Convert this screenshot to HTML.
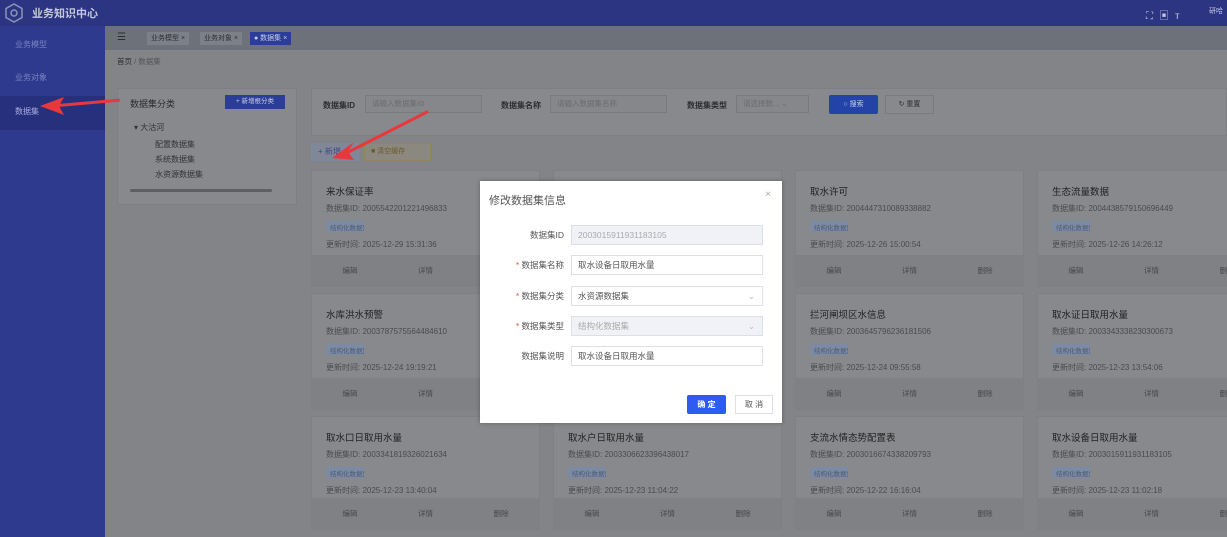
<!DOCTYPE html>
<html><head><meta charset="utf-8"><style>
*{margin:0;padding:0;box-sizing:border-box}
body{width:1227px;height:537px;overflow:hidden;position:relative;background:#828487;font-family:"Liberation Sans","Noto Sans CJK SC",sans-serif;font-size:9px;color:#333}
.a{position:absolute}
.top{left:0;top:0;width:1227px;height:26px;background:#2b3582}
.side{left:0;top:26px;width:105px;height:511px;background:#2e3a8e}
.tabs{left:105px;top:26px;width:1122px;height:24px;background:#6d7179}
.tab{position:absolute;top:6px;height:13px;background:#7d8088;color:#2d2f35;font-size:7px;line-height:13px;padding:0 4px}
.panel{background:#87898c;border:1px solid #7d7f82}
.card{position:absolute;width:229px;height:117px;background:#87898c;border:1px solid #7e8083}
.card .t{position:absolute;left:14px;top:13px;font-size:9.5px;color:#222}
.card .i{position:absolute;left:14px;top:32px;font-size:8px;color:#4a4b4e}
.card .g{position:absolute;left:14px;top:50px;font-size:6.5px;color:#4d5a75;background:#7c8aa3;padding:1px 4px;height:11px;width:38px;overflow:hidden;white-space:nowrap}
.card .m{position:absolute;left:14px;top:68px;font-size:8px;color:#4a4b4e}
.card .f{position:absolute;left:0;bottom:0;width:100%;height:31px;background:#7f8184;display:flex;font-size:7.5px;color:#45474a;line-height:31px}
.card .f span{flex:1;text-align:center}
.inp{position:absolute;height:18px;border:1px solid #777a7e;background:#85878a;font-size:7.5px;color:#6a6c70;line-height:16px;padding-left:6px}
.lbl{position:absolute;font-size:8px;color:#2c2d30;font-weight:bold}
.modal{left:480px;top:181px;width:302px;height:242px;background:#fff;box-shadow:0 0 4px rgba(0,0,0,.3)}
.fl{position:absolute;right:218px;font-size:8.5px;color:#555;text-align:right;width:100px}
.fl b{color:#e54;font-weight:normal}
.fi{position:absolute;left:91px;width:192px;height:20px;border:1px solid #dcdfe6;font-size:8.5px;color:#555;line-height:18px;padding-left:6px}
.dis{background:#f0f2f6;color:#aaa}
.arrow{position:absolute;height:3px;background:#e8383d;transform-origin:0 50%}
</style></head><body>
<div class="a top">
 <svg class="a" style="left:4px;top:3px" width="20" height="20" viewBox="0 0 20 20"><polygon points="10,1 18,5.5 18,14.5 10,19 2,14.5 2,5.5" fill="none" stroke="#8d93b8" stroke-width="1.5"/><circle cx="10" cy="10" r="3" fill="none" stroke="#8d93b8" stroke-width="1.5"/></svg>
 <div class="a" style="left:32px;top:5px;font-size:11px;color:#c5c8dd;font-weight:bold">业务知识中心</div>
 <div class="a" style="left:1146px;top:7px;font-size:10px;color:#c5c8dd;letter-spacing:6px">⛶▣ᴛ</div>
 <div class="a" style="left:1209px;top:6px;font-size:7px;color:#c5c8dd">研哈</div>
</div>
<div class="a side">
 <div class="a" style="left:15px;top:13px;font-size:8px;color:#7a84c0">业务模型</div>
 <div class="a" style="left:15px;top:46px;font-size:8px;color:#7a84c0">业务对象</div>
 <div class="a" style="left:0;top:70px;width:105px;height:34px;background:#27307c"></div>
 <div class="a" style="left:15px;top:80px;font-size:8px;color:#a8aee0">数据集</div>
</div>
<div class="a tabs">
 <div class="a" style="left:12px;top:6px;font-size:10px;color:#2a2c30">☰</div>
 <div class="tab" style="left:42px">业务模型 ×</div>
 <div class="tab" style="left:95px">业务对象 ×</div>
 <div class="tab" style="left:145px;background:#2b3d96;color:#c8cde8">● 数据集 ×</div>
</div>
<div class="a" style="left:117px;top:56px;font-size:7.5px;color:#2c2d30">首页 <span style="color:#555">/ 数据集</span></div>
<div class="a panel" style="left:117px;top:88px;width:180px;height:117px">
 <div class="a" style="left:12px;top:8px;font-size:9px;color:#2a2b2e">数据集分类</div>
 <div class="a" style="left:107px;top:6px;width:60px;height:14px;background:#2b3d96;color:#c8cde8;font-size:6.5px;line-height:14px;text-align:center">+ 新增根分类</div>
 <div class="a" style="left:16px;top:33px;font-size:8px;color:#333">▾ 大沽河</div>
 <div class="a" style="left:37px;top:48px;font-size:8px;color:#333;line-height:15px">配置数据集<br>系统数据集<br>水资源数据集</div>
 <div class="a" style="left:12px;top:100px;width:142px;height:3px;background:#5d5f63;border-radius:2px"></div>
</div>
<div class="a panel" style="left:311px;top:88px;width:916px;height:48px">
 <div class="lbl" style="left:11px;top:11px">数据集ID</div>
 <div class="inp" style="left:53px;top:6px;width:117px">请输入数据集ID</div>
 <div class="lbl" style="left:189px;top:11px">数据集名称</div>
 <div class="inp" style="left:238px;top:6px;width:117px">请输入数据集名称</div>
 <div class="lbl" style="left:375px;top:11px">数据集类型</div>
 <div class="inp" style="left:424px;top:6px;width:73px">请选择数... ⌄</div>
 <div class="a" style="left:517px;top:6px;width:49px;height:19px;background:#2343a8;color:#c6cdea;font-size:7px;line-height:19px;text-align:center;border-radius:2px">○ 搜索</div>
 <div class="a" style="left:573px;top:6px;width:49px;height:19px;border:1px solid #7a7c80;color:#2c2d30;font-size:7px;line-height:17px;text-align:center">↻ 重置</div>
</div>
<div class="a" style="left:311px;top:143px;width:48px;height:18px;border:1px solid #7c8aa3;background:#808797;color:#3d4d80;font-size:8px;line-height:16px;padding-left:6px">+ 新增</div>
<div class="a" style="left:364px;top:143px;width:67px;height:18px;border:1px solid #95855f;background:#8a887f;color:#6e5a2a;font-size:7px;line-height:16px;padding-left:6px">■ 清空缓存</div>

<div class="card" style="left:311px;top:170px"><div class="t">来水保证率</div><div class="i">数据集ID: 2005542201221496833</div><div class="g">结构化数据集</div><div class="m">更新时间: 2025-12-29 15:31:36</div><div class="f"><span>编辑</span><span>详情</span><span>删除</span></div></div>
<div class="card" style="left:553px;top:170px"><div class="f"><span>编辑</span><span>详情</span><span>删除</span></div></div>
<div class="card" style="left:795px;top:170px"><div class="t">取水许可</div><div class="i">数据集ID: 2004447310089338882</div><div class="g">结构化数据集</div><div class="m">更新时间: 2025-12-26 15:00:54</div><div class="f"><span>编辑</span><span>详情</span><span>删除</span></div></div>
<div class="card" style="left:1037px;top:170px"><div class="t">生态流量数据</div><div class="i">数据集ID: 2004438579150696449</div><div class="g">结构化数据集</div><div class="m">更新时间: 2025-12-26 14:26:12</div><div class="f"><span>编辑</span><span>详情</span><span>删除</span></div></div>

<div class="card" style="left:311px;top:293px"><div class="t">水库洪水预警</div><div class="i">数据集ID: 2003787575564484610</div><div class="g">结构化数据集</div><div class="m">更新时间: 2025-12-24 19:19:21</div><div class="f"><span>编辑</span><span>详情</span><span>删除</span></div></div>
<div class="card" style="left:553px;top:293px"><div class="f"><span>编辑</span><span>详情</span><span>删除</span></div></div>
<div class="card" style="left:795px;top:293px"><div class="t">拦河闸坝区水信息</div><div class="i">数据集ID: 2003645796236181506</div><div class="g">结构化数据集</div><div class="m">更新时间: 2025-12-24 09:55:58</div><div class="f"><span>编辑</span><span>详情</span><span>删除</span></div></div>
<div class="card" style="left:1037px;top:293px"><div class="t">取水证日取用水量</div><div class="i">数据集ID: 2003343338230300673</div><div class="g">结构化数据集</div><div class="m">更新时间: 2025-12-23 13:54:06</div><div class="f"><span>编辑</span><span>详情</span><span>删除</span></div></div>

<div class="card" style="left:311px;top:416px;height:114px"><div class="t">取水口日取用水量</div><div class="i">数据集ID: 2003341819326021634</div><div class="g">结构化数据集</div><div class="m">更新时间: 2025-12-23 13:40:04</div><div class="f"><span>编辑</span><span>详情</span><span>删除</span></div></div>
<div class="card" style="left:553px;top:416px;height:114px"><div class="t">取水户日取用水量</div><div class="i">数据集ID: 2003306623396438017</div><div class="g">结构化数据集</div><div class="m">更新时间: 2025-12-23 11:04:22</div><div class="f"><span>编辑</span><span>详情</span><span>删除</span></div></div>
<div class="card" style="left:795px;top:416px;height:114px"><div class="t">支流水情态势配置表</div><div class="i">数据集ID: 2003016674338209793</div><div class="g">结构化数据集</div><div class="m">更新时间: 2025-12-22 16:16:04</div><div class="f"><span>编辑</span><span>详情</span><span>删除</span></div></div>
<div class="card" style="left:1037px;top:416px;height:114px"><div class="t">取水设备日取用水量</div><div class="i">数据集ID: 2003015911931183105</div><div class="g">结构化数据集</div><div class="m">更新时间: 2025-12-23 11:02:18</div><div class="f"><span>编辑</span><span>详情</span><span>删除</span></div></div>

<div class="a modal">
 <div class="a" style="left:9px;top:11px;font-size:11px;color:#555">修改数据集信息</div>
 <div class="a" style="right:11px;top:8px;font-size:10px;color:#aaa">×</div>
 <div class="fl" style="top:48px">数据集ID</div><div class="fi dis" style="top:44px">2003015911931183105</div>
 <div class="fl" style="top:78px"><b>*</b> 数据集名称</div><div class="fi" style="top:74px">取水设备日取用水量</div>
 <div class="fl" style="top:109px"><b>*</b> 数据集分类</div><div class="fi" style="top:105px">水资源数据集<span style="position:absolute;right:7px;color:#bbb">⌄</span></div>
 <div class="fl" style="top:139px"><b>*</b> 数据集类型</div><div class="fi dis" style="top:135px">结构化数据集<span style="position:absolute;right:7px;color:#bbb">⌄</span></div>
 <div class="fl" style="top:169px">数据集说明</div><div class="fi" style="top:165px">取水设备日取用水量</div>
 <div class="a" style="left:207px;top:214px;width:39px;height:19px;background:#2f5cf0;color:#fff;font-size:8px;line-height:19px;text-align:center;border-radius:2px;font-weight:bold">确 定</div>
 <div class="a" style="left:255px;top:214px;width:38px;height:19px;border:1px solid #dcdfe6;color:#555;font-size:8px;line-height:17px;text-align:center">取 消</div>
</div>
<div class="arrow" style="left:58px;top:104px;width:62px;transform:rotate(-5deg)"></div>
<svg class="a" style="left:40px;top:96px" width="26" height="20"><polygon points="0,10 24,1 19,10 24,19" fill="#e8383d"/></svg>
<div class="arrow" style="left:428px;top:110px;width:95px;transform:rotate(153deg)"></div>
<svg class="a" style="left:332px;top:142px" width="26" height="22"><polygon points="0,16 22,0 16,10 22,18" fill="#e8383d"/></svg>
</body></html>
